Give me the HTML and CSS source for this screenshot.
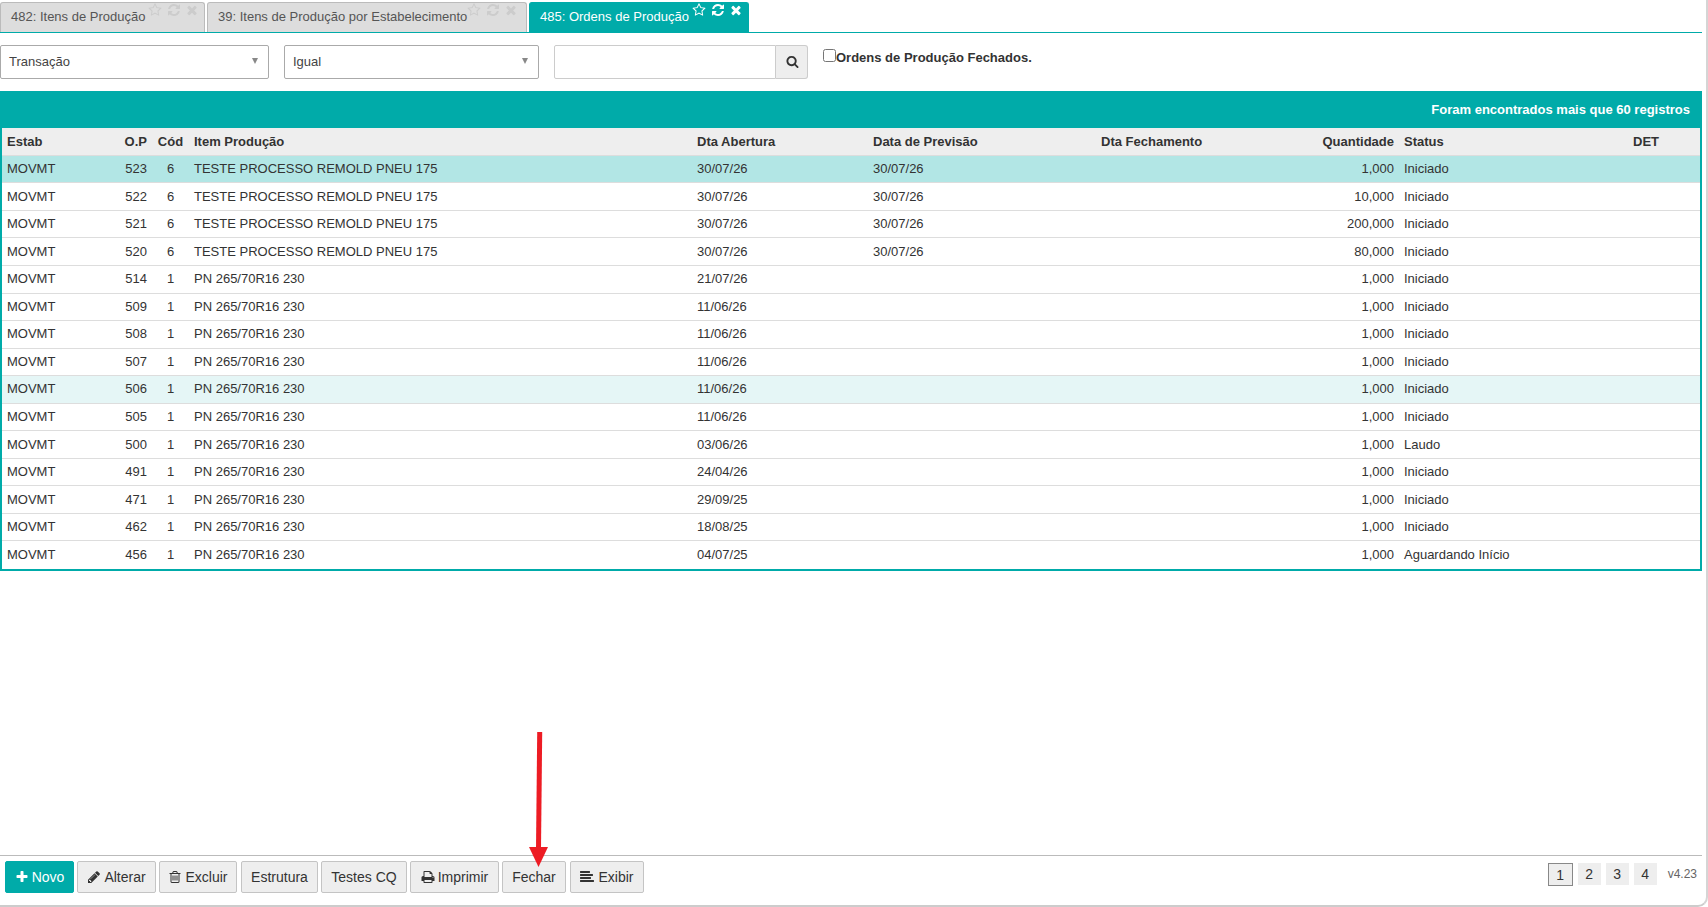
FILE: index.html
```html
<!DOCTYPE html>
<html lang="pt-BR">

<head>
    <meta charset="UTF-8">
    <title>Ordens de Produção</title>
    <link rel="stylesheet" href="styles.css">
</head>

<body>
    <svg class="defs" xmlns="http://www.w3.org/2000/svg">
        <symbol id="i-star" viewBox="0 0 1792 1792"><path d="M1201 1004l306-297-422-62-189-382-189 382-422 62 306 297-73 421 378-199 377 199zm527-357q0 22-26 48l-363 354 86 500q1 7 1 20 0 50-41 50-19 0-40-12l-449-236-449 236q-22 12-40 12-21 0-31.500-14.500t-10.500-35.500q0-6 2-20l86-500-364-354q-25-27-25-48 0-37 56-46l502-73 225-455q19-41 49-41t49 41l225 455 502 73q56 9 56 46z"/></symbol>
        <symbol id="i-refresh" viewBox="0 0 1792 1792"><path d="M1639 1056q0 5-1 7-64 268-268 434.500t-478 166.500q-146 0-282.500-55t-243.500-157l-129 129q-19 19-45 19t-45-19-19-45v-448q0-26 19-45t45-19h448q26 0 45 19t19 45-19 45l-137 137q71 66 161 102t187 36q134 0 250-65t186-179q11-17 53-117 8-23 30-23h192q13 0 22.500 9.500t9.500 22.500zm25-800v448q0 26-19 45t-45 19h-448q-26 0-45-19t-19-45 19-45l138-138q-148-137-349-137-134 0-250 65t-186 179q-11 17-53 117-8 23-30 23h-199q-13 0-22.500-9.500t-9.500-22.500v-7q65-268 270-434.500t480-166.500q146 0 284 55.500t245 156.500l130-129q19-19 45-19t45 19 19 45z"/></symbol>
        <symbol id="i-times" viewBox="0 0 1792 1792"><path d="M1490 1322q0 40-28 68l-136 136q-28 28-68 28t-68-28l-294-294-294 294q-28 28-68 28t-68-28l-136-136q-28-28-28-68t28-68l294-294-294-294q-28-28-28-68t28-68l136-136q28-28 68-28t68 28l294 294 294-294q28-28 68-28t68 28l136 136q28 28 28 68t-28 68l-294 294 294 294q28 28 28 68z"/></symbol>
        <symbol id="i-search" viewBox="0 0 1792 1792"><path d="M1216 832q0-185-131.500-316.500t-316.500-131.500-316.500 131.500-131.500 316.500 131.500 316.500 316.500 131.500 316.500-131.500 131.500-316.500zm512 832q0 52-38 90t-90 38q-54 0-90-38l-343-342q-179 124-399 124-143 0-273.500-55.500t-225-150-150-225-55.500-273.500 55.500-273.500 150-225 225-150 273.500-55.500 273.500 55.500 225 150 150 225 55.500 273.500q0 220-124 399l343 343q37 37 37 90z"/></symbol>
        <symbol id="i-plus" viewBox="0 0 1792 1792"><path d="M1600 736v192q0 40-28 68t-68 28h-416v416q0 40-28 68t-68 28h-192q-40 0-68-28t-28-68v-416h-416q-40 0-68-28t-28-68v-192q0-40 28-68t68-28h416v-416q0-40 28-68t68-28h192q40 0 68 28t28 68v416h416q40 0 68 28t28 68z"/></symbol>
        <symbol id="i-pencil" viewBox="0 0 1792 1792"><path d="M491 1536l91-91-235-235-91 91v107h128v128h107zm523-928q0-22-22-22-10 0-17 7l-542 542q-7 7-7 17 0 22 22 22 10 0 17-7l542-542q7-7 7-17zm-54-192l416 416-832 832h-416v-416zm683 96q0 53-37 90l-166 166-416-416 166-165q36-38 90-38 53 0 91 38l235 234q37 39 37 91z"/></symbol>
        <symbol id="i-trash" viewBox="0 0 1792 1792"><path d="M704 736v576q0 14-9 23t-23 9h-64q-14 0-23-9t-9-23v-576q0-14 9-23t23-9h64q14 0 23 9t9 23zm256 0v576q0 14-9 23t-23 9h-64q-14 0-23-9t-9-23v-576q0-14 9-23t23-9h64q14 0 23 9t9 23zm256 0v576q0 14-9 23t-23 9h-64q-14 0-23-9t-9-23v-576q0-14 9-23t23-9h64q14 0 23 9t9 23zm128 724v-948h-896v948q0 22 7 40.500t14.500 27 10.500 8.500h832q3 0 10.500-8.500t14.500-27 7-40.500zm-672-1076h448l-48-117q-7-9-17-11h-317q-10 2-17 11zm928 32v64q0 14-9 23t-23 9h-96v948q0 83-47 143.500t-113 60.500h-832q-66 0-113-58.500t-47-141.500v-952h-96q-14 0-23-9t-9-23v-64q0-14 9-23t23-9h309l70-167q15-37 54-63t79-26h320q40 0 79 26t54 63l70 167h309q14 0 23 9t9 23z"/></symbol>
        <symbol id="i-print" viewBox="0 0 1792 1792"><path d="M448 1536h896v-256h-896v256zm0-640h896v-384h-160q-40 0-68-28t-28-68v-160h-640v640zm1152 64q0-26-19-45t-45-19-45 19-19 45 19 45 45 19 45-19 19-45zm128 0v416q0 13-9.500 22.500t-22.500 9.500h-224v160q0 40-28 68t-68 28h-960q-40 0-68-28t-28-68v-160h-224q-13 0-22.500-9.500t-9.500-22.500v-416q0-79 56.500-135.500t135.500-56.500h64v-544q0-40 28-68t68-28h672q40 0 88 20t76 48l152 152q28 28 48 76t20 88v256h64q79 0 135.500 56.500t56.500 135.500z"/></symbol>
        <symbol id="i-align" viewBox="0 0 1792 1792"><path d="M1792 1344v128q0 26-19 45t-45 19h-1664q-26 0-45-19t-19-45v-128q0-26 19-45t45-19h1664q26 0 45 19t19 45zm-384-384v128q0 26-19 45t-45 19h-1280q-26 0-45-19t-19-45v-128q0-26 19-45t45-19h1280q26 0 45 19t19 45zm256-384v128q0 26-19 45t-45 19h-1536q-26 0-45-19t-19-45v-128q0-26 19-45t45-19h1536q26 0 45 19t19 45zm-384-384v128q0 26-19 45t-45 19h-1152q-26 0-45-19t-19-45v-128q0-26 19-45t45-19h1152q26 0 45 19t19 45z"/></symbol>
    </svg>

    <div class="page">
        <div class="tabs">
            <div class="tab tab-1">
                <span class="tab-title">482: Itens de Produção</span>
                <span class="tab-icons">
                    <svg class="tab-icon"><use href="#i-star"/></svg>
                    <svg class="tab-icon"><use href="#i-refresh"/></svg>
                    <svg class="tab-icon"><use href="#i-times"/></svg>
                </span>
            </div>
            <div class="tab tab-2">
                <span class="tab-title">39: Itens de Produção por Estabelecimento</span>
                <span class="tab-icons">
                    <svg class="tab-icon"><use href="#i-star"/></svg>
                    <svg class="tab-icon"><use href="#i-refresh"/></svg>
                    <svg class="tab-icon"><use href="#i-times"/></svg>
                </span>
            </div>
            <div class="tab tab-3 active">
                <span class="tab-title">485: Ordens de Produção</span>
                <span class="tab-icons">
                    <svg class="tab-icon"><use href="#i-star"/></svg>
                    <svg class="tab-icon"><use href="#i-refresh"/></svg>
                    <svg class="tab-icon"><use href="#i-times"/></svg>
                </span>
            </div>
        </div>

        <div class="filters">
            <div class="combo combo-field"><span>Transação</span><i class="caret"></i></div>
            <div class="combo combo-op"><span>Igual</span><i class="caret"></i></div>
            <div class="search-box">
                <input class="search-input" type="text">
                <button class="search-btn"><svg class="ico"><use href="#i-search"/></svg></button>
            </div>
            <label class="closed-check"><input type="checkbox"><span class="closed-text">Ordens de Produção Fechados.</span></label>
        </div>

        <div class="panel">
            <div class="panel-head">Foram encontrados mais que 60 registros</div>
            <table class="grid">
                <colgroup>
                    <col class="c-estab"><col class="c-op"><col class="c-cod"><col class="c-item">
                    <col class="c-open"><col class="c-prev"><col class="c-close"><col class="c-qty">
                    <col class="c-status"><col class="c-det">
                </colgroup>
                <thead>
                    <tr>
                        <th>Estab</th><th class="right">O.P</th><th class="mid">Cód</th><th>Item Produção</th>
                        <th>Dta Abertura</th><th>Data de Previsão</th><th>Dta Fechamento</th><th class="right">Quantidade</th>
                        <th>Status</th><th>DET</th>
                    </tr>
                </thead>
                <tbody>
                    <tr class="selected"><td>MOVMT</td><td class="right">523</td><td class="mid">6</td><td>TESTE PROCESSO REMOLD PNEU 175</td><td>30/07/26</td><td>30/07/26</td><td></td><td class="right">1,000</td><td>Iniciado</td><td></td></tr>
                    <tr><td>MOVMT</td><td class="right">522</td><td class="mid">6</td><td>TESTE PROCESSO REMOLD PNEU 175</td><td>30/07/26</td><td>30/07/26</td><td></td><td class="right">10,000</td><td>Iniciado</td><td></td></tr>
                    <tr><td>MOVMT</td><td class="right">521</td><td class="mid">6</td><td>TESTE PROCESSO REMOLD PNEU 175</td><td>30/07/26</td><td>30/07/26</td><td></td><td class="right">200,000</td><td>Iniciado</td><td></td></tr>
                    <tr><td>MOVMT</td><td class="right">520</td><td class="mid">6</td><td>TESTE PROCESSO REMOLD PNEU 175</td><td>30/07/26</td><td>30/07/26</td><td></td><td class="right">80,000</td><td>Iniciado</td><td></td></tr>
                    <tr><td>MOVMT</td><td class="right">514</td><td class="mid">1</td><td>PN 265/70R16 230</td><td>21/07/26</td><td></td><td></td><td class="right">1,000</td><td>Iniciado</td><td></td></tr>
                    <tr><td>MOVMT</td><td class="right">509</td><td class="mid">1</td><td>PN 265/70R16 230</td><td>11/06/26</td><td></td><td></td><td class="right">1,000</td><td>Iniciado</td><td></td></tr>
                    <tr><td>MOVMT</td><td class="right">508</td><td class="mid">1</td><td>PN 265/70R16 230</td><td>11/06/26</td><td></td><td></td><td class="right">1,000</td><td>Iniciado</td><td></td></tr>
                    <tr><td>MOVMT</td><td class="right">507</td><td class="mid">1</td><td>PN 265/70R16 230</td><td>11/06/26</td><td></td><td></td><td class="right">1,000</td><td>Iniciado</td><td></td></tr>
                    <tr class="hover"><td>MOVMT</td><td class="right">506</td><td class="mid">1</td><td>PN 265/70R16 230</td><td>11/06/26</td><td></td><td></td><td class="right">1,000</td><td>Iniciado</td><td></td></tr>
                    <tr><td>MOVMT</td><td class="right">505</td><td class="mid">1</td><td>PN 265/70R16 230</td><td>11/06/26</td><td></td><td></td><td class="right">1,000</td><td>Iniciado</td><td></td></tr>
                    <tr><td>MOVMT</td><td class="right">500</td><td class="mid">1</td><td>PN 265/70R16 230</td><td>03/06/26</td><td></td><td></td><td class="right">1,000</td><td>Laudo</td><td></td></tr>
                    <tr><td>MOVMT</td><td class="right">491</td><td class="mid">1</td><td>PN 265/70R16 230</td><td>24/04/26</td><td></td><td></td><td class="right">1,000</td><td>Iniciado</td><td></td></tr>
                    <tr><td>MOVMT</td><td class="right">471</td><td class="mid">1</td><td>PN 265/70R16 230</td><td>29/09/25</td><td></td><td></td><td class="right">1,000</td><td>Iniciado</td><td></td></tr>
                    <tr><td>MOVMT</td><td class="right">462</td><td class="mid">1</td><td>PN 265/70R16 230</td><td>18/08/25</td><td></td><td></td><td class="right">1,000</td><td>Iniciado</td><td></td></tr>
                    <tr><td>MOVMT</td><td class="right">456</td><td class="mid">1</td><td>PN 265/70R16 230</td><td>04/07/25</td><td></td><td></td><td class="right">1,000</td><td>Aguardando Início</td><td></td></tr>
                </tbody>
            </table>
        </div>

        <div class="toolbar">
            <div class="actions">
                <button class="btn btn-primary btn-novo"><svg class="ico"><use href="#i-plus"/></svg>Novo</button>
                <button class="btn btn-alterar"><svg class="ico"><use href="#i-pencil"/></svg>Alterar</button>
                <button class="btn btn-excluir"><svg class="ico"><use href="#i-trash"/></svg>Excluir</button>
                <button class="btn btn-estrutura">Estrutura</button>
                <button class="btn btn-testes">Testes CQ</button>
                <button class="btn btn-imprimir"><svg class="ico"><use href="#i-print"/></svg>Imprimir</button>
                <button class="btn btn-fechar">Fechar</button>
                <button class="btn btn-exibir"><svg class="ico"><use href="#i-align"/></svg>Exibir</button>
            </div>
            <div class="pager">
                <span class="page-num current">1</span>
                <span class="page-num">2</span>
                <span class="page-num">3</span>
                <span class="page-num">4</span>
                <span class="version">v4.23</span>
            </div>
        </div>
    </div>

    <!-- seta de destaque sobre o botao Fechar -->
    <svg class="arrow" viewBox="0 0 24 140">
        <path class="arrow-shaft" d="M10.700 0 L9.500 118"/>
        <path class="arrow-head" d="M0 115 L19 115 L9.500 135 Z"/>
    </svg>
</body>

</html>
```

FILE: styles.css
```css
* {
    box-sizing: border-box;
}

html,
body {
    margin: 0;
    height: 100%;
    overflow: hidden;
}

body {
    background: #fff;
    color: #333;
    font-family: "Liberation Sans", Arial, sans-serif;
    font-size: 14px;
}

.defs {
    display: none;
}

.page {
    display: flex;
    flex-direction: column;
    height: 907px;
    border-right: 2px solid #d5d5d5;
    border-bottom: 2px solid #ccc;
    border-bottom-right-radius: 10px;
}

/* abas */
.tabs {
    display: flex;
    gap: 2px;
    height: 33px;
    padding-top: 2px;
    margin-right: 4px;
    border-bottom: 1px solid #00aba9;
}

.tab {
    position: relative;
    display: flex;
    height: 30px;
    background: #ddd;
    border: 1px solid #bbb;
    border-bottom: 0;
    border-radius: 3px 3px 0 0;
    color: #555;
    font-size: 13px;
}

.tab-1 {
    width: 205px;
}

.tab-2 {
    width: 320px;
}

.tab-3 {
    width: 220px;
}

.tab.active {
    background: #00aba9;
    border-color: #00aba9;
    color: #fff;
}

.tab-title {
    padding: 6px 0 0 10px;
    white-space: nowrap;
}

.tab-icons {
    position: absolute;
    top: 0;
    right: 5px;
    display: flex;
    gap: 4.500px;
}

.tab-2 .tab-icons {
    right: 8px;
}

.tab-icon {
    width: 14px;
    height: 14px;
    fill: #ccc;
}

.active .tab-icon {
    fill: #fff;
}

/* filtros */
.filters {
    display: flex;
    height: 58px;
    padding-top: 12px;
}

.combo {
    display: flex;
    align-items: center;
    justify-content: space-between;
    height: 34px;
    padding: 0 9px 2px 8px;
    background: #fff;
    border: 1px solid #aaa;
    border-radius: 2px;
    font-size: 13px;
    color: #444;
}

.combo-field {
    width: 269px;
    margin-right: 15px;
}

.combo-op {
    width: 255px;
    margin-right: 15px;
}

.caret {
    width: 0;
    height: 0;
    margin-right: 1px;
    border-left: 3.500px solid transparent;
    border-right: 3.500px solid transparent;
    border-top: 6px solid #888;
}

.search-box {
    display: flex;
    height: 34px;
}

.search-input {
    width: 222px;
    height: 34px;
    border: 1px solid #ccc;
    border-radius: 2px 0 0 2px;
}

.search-btn {
    width: 32px;
    height: 34px;
    padding: 0;
    background: #eee;
    border: 1px solid #ccc;
    border-left: 0;
    border-radius: 0 3px 3px 0;
}

.closed-check {
    display: flex;
    height: 16px;
    margin: 3px 0 0 14px;
    font-size: 13px;
    font-weight: bold;
}

.closed-check input {
    width: 13px;
    height: 13px;
    margin: 1px 0 0 1px;
}

.closed-text {
    padding-top: 2px;
}

/* grade */
.panel {
    width: 1702px;
    border: 2px solid #00aba9;
    border-top: 0;
}

.panel-head {
    height: 37px;
    margin: 0 -2px;
    padding: 11px 12px 0 0;
    background: #00aba9;
    color: #fff;
    font-size: 13px;
    font-weight: bold;
    text-align: right;
}

.grid {
    width: 100%;
    table-layout: fixed;
    border-collapse: collapse;
    font-size: 13px;
}

.c-estab { width: 108px; }
.c-op { width: 42px; }
.c-cod { width: 37px; }
.c-item { width: 503px; }
.c-open { width: 176px; }
.c-prev { width: 228px; }
.c-close { width: 203px; }
.c-qty { width: 100px; }
.c-status { width: 229px; }

.grid th,
.grid td {
    padding: 0 5px;
    text-align: left;
    white-space: nowrap;
}

.grid th {
    height: 27.300px;
    background: #eee;
}

.grid td {
    height: 27.550px;
    padding-bottom: 1px;
    border-top: 1px solid #ddd;
}

.grid .right {
    text-align: right;
}

.grid .mid {
    text-align: center;
}

.selected td {
    background: #b2e6e5;
}

.hover td {
    background: #e5f6f6;
}

/* rodape */
.toolbar {
    display: flex;
    justify-content: space-between;
    margin-top: auto;
    height: 50px;
    border-top: 1px solid #bbb;
    margin-right: 4px;
    padding: 5px 5px 0 5px;
}

.actions {
    display: flex;
    gap: 3px;
}

.btn {
    display: flex;
    align-items: center;
    justify-content: center;
    height: 32px;
    padding: 0;
    background: #eee;
    border: 1px solid #c4c4c4;
    border-radius: 2px;
    color: #333;
    fill: #333;
    font-family: inherit;
    font-size: 14px;
}

.btn-primary {
    background: #00aba9;
    border-color: #00aba9;
    color: #fff;
    fill: #fff;
}

.btn-novo { width: 69px; }
.btn-alterar { width: 79px; }
.btn-excluir { width: 78px; }
.btn-estrutura { width: 77px; margin-left: 1px; }
.btn-testes { width: 86px; }
.btn-imprimir { width: 89px; }
.btn-fechar { width: 64px; }
.btn-exibir { width: 74px; margin-left: 1px; }

.ico {
    width: 14px;
    height: 14px;
    margin-right: 3px;
}

.btn-exibir .ico {
    margin-right: 4px;
}

.search-btn .ico {
    width: 13px;
    height: 13px;
    margin: 2px 0 0 1px;
    fill: #333;
}

.pager {
    display: flex;
    gap: 5px;
    padding-top: 2px;
}

.page-num {
    display: flex;
    align-items: center;
    justify-content: center;
    width: 23px;
    height: 22px;
    background: #eee;
}

.page-num.current {
    width: 25px;
    height: 23px;
    border: 1px solid #888;
}

.version {
    margin-left: 6px;
    padding-top: 4px;
    color: #666;
    font-size: 12px;
}

/* seta */
.arrow {
    position: absolute;
    left: 529px;
    top: 732px;
    width: 24px;
    height: 140px;
}

.arrow-shaft {
    stroke: #ed1c24;
    stroke-width: 5;
    fill: none;
}

.arrow-head {
    fill: #ed1c24;
}
```
